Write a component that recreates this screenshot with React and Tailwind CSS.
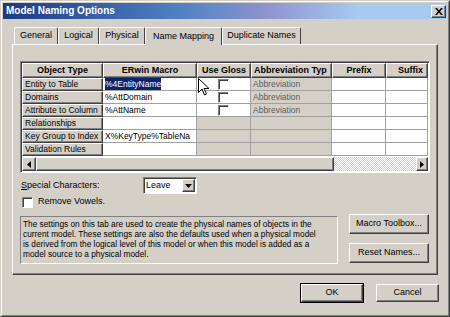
import React from 'react'

const raised = 'border border-t-white border-l-white border-r-[#404040] border-b-[#404040] shadow-[inset_-1px_-1px_#808080]'
const sunken = 'border border-t-[#808080] border-l-[#808080] border-r-white border-b-white shadow-[inset_1px_1px_#404040]'

const rows = [
    { type: 'Entity to Table', macro: '%4EntityName', gloss: true, abbr: 'Abbreviation', selected: true },
    { type: 'Domains', macro: '%AttDomain', gloss: true, abbr: 'Abbreviation' },
    { type: 'Attribute to Column', macro: '%AttName', gloss: true, abbr: 'Abbreviation' },
    { type: 'Relationships', macro: '', gloss: false, abbr: '' },
    { type: 'Key Group to Index', macro: 'X%KeyType%TableNa', gloss: false, abbr: '' },
    { type: 'Validation Rules', macro: '', gloss: false, abbr: '' },
]

const tabs = [
    { name: 'General', w: 'w-[44px]' },
    { name: 'Logical', w: 'w-[41px]' },
    { name: 'Physical', w: 'w-[46px]' },
    { name: 'Name Mapping', w: 'w-[77px]', active: true },
    { name: 'Duplicate Names', w: 'w-[79px]' },
]

function Checkbox() {
    return <div className={`w-[11px] h-[11px] shrink-0 bg-white ${sunken}`} />
}

function HeadCell({ children, className = '' }) {
    return (
        <div className={`h-[15px] flex items-center justify-center font-bold text-[9px] bg-[#d4d0c8] whitespace-nowrap overflow-hidden ${raised} ${className}`}>
            {children}
        </div>
    )
}

function Btn({ children, className = '', bold }) {
    return (
        <div className={`shrink-0 flex items-center justify-center bg-[#d4d0c8] text-[9px] ${bold ? 'outline outline-1 outline-black' : ''} ${raised} ${className}`}>
            {children}
        </div>
    )
}

export default function App() {
    const cell = 'h-[13px] flex items-center px-[2px] border-r border-b border-[#a0a0a0] text-[8.5px] whitespace-nowrap overflow-hidden'

    return (
        <div className="relative w-[450px] h-[317px] bg-[#d4d0c8] text-black font-['Liberation_Sans',Arial,sans-serif] border border-t-[#d4d0c8] border-l-[#d4d0c8] border-r-[#404040] border-b-[#404040] flex flex-col">
            <div className="flex-1 flex flex-col border border-t-white border-l-white border-r-[#808080] border-b-[#808080] p-px">
                {/* title bar */}
                <div className="h-[16px] flex items-center justify-between pl-[3px] pr-[1px] bg-[linear-gradient(90deg,#1c3a82_0%,#4f82c4_40%,#8f95cf_60%,#a6caf0_80%,#a6caf0_100%)]">
                    <span className="text-white font-bold text-[10px] leading-none">Model Naming Options</span>
                    <div className={`w-[15px] h-[13px] flex items-center justify-center bg-[#d4d0c8] ${raised}`}>
                        <svg width="8" height="7" viewBox="0 0 8 7">
                            <path d="M0 0h2l2 2.5L6 0h2L5 3.5 8 7H6L4 4.5 2 7H0l3-3.5z" fill="black" />
                        </svg>
                    </div>
                </div>

                {/* tabs */}
                <div className="mt-[8px] ml-[11px] flex h-[17px] items-end">
                    {tabs.map(t => (
                        <div
                            key={t.name}
                            className={`${t.w} h-[17px] shrink-0 flex items-center justify-center text-[9px] whitespace-nowrap border-t border-l border-r border-t-white border-l-white border-r-[#404040] rounded-t-[2px] bg-[#d4d0c8] ${t.active ? 'relative z-10 -mb-px h-[18px]' : ''}`}
                        >
                            {t.name}
                        </div>
                    ))}
                </div>

                {/* panel */}
                <div className={`ml-[9px] mr-[9px] h-[231px] px-[7px] pt-[16px] ${raised}`}>
                    {/* table */}
                    <div className={`w-[410px] bg-white ${sunken} p-px`}>
                        <div className="grid grid-cols-[81px_94px_54px_81px_54px_42px]">
                            <HeadCell>Object Type</HeadCell>
                            <HeadCell>ERwin Macro</HeadCell>
                            <HeadCell>Use Gloss</HeadCell>
                            <HeadCell className="justify-start pl-[2px]">Abbreviation Typ</HeadCell>
                            <HeadCell>Prefix</HeadCell>
                            <HeadCell className="justify-end pr-[4px]">Suffix</HeadCell>
                            {rows.map(r => (
                                <React.Fragment key={r.type}>
                                    <div className={`${cell} bg-[#d4d0c8] ${raised}`}>{r.type}</div>
                                    <div className={`${cell} bg-white`}>
                                        {r.selected ? <span className="bg-[#0a246a] text-white">{r.macro}</span> : r.macro}
                                    </div>
                                    <div className={`${cell} justify-center ${r.gloss ? 'bg-white' : 'bg-[#d4d0c8]'}`}>
                                        {r.gloss && <Checkbox />}
                                    </div>
                                    <div className={`${cell} bg-[#d4d0c8] text-[#5c5c5c]`}>{r.abbr}</div>
                                    <div className={`${cell} bg-white`} />
                                    <div className={`${cell} bg-white`} />
                                </React.Fragment>
                            ))}
                        </div>
                        {/* horizontal scrollbar */}
                        <div className="mt-[1px] h-[14px] flex bg-[#d4d0c8]">
                            <Btn className="w-[14px] h-[14px]">
                                <svg width="4" height="7" viewBox="0 0 4 7"><path d="M4 0v7L0 3.5z" fill="black" /></svg>
                            </Btn>
                            <div className={`w-[298px] h-[14px] shrink-0 ${raised}`} />
                            <div className="flex-1 h-[14px] bg-[repeating-conic-gradient(#ffffff_0_25%,#d4d0c8_0_50%)] bg-[length:2px_2px]" />
                            <Btn className="w-[12px] h-[14px]">
                                <svg width="4" height="7" viewBox="0 0 4 7"><path d="M0 0v7L4 3.5z" fill="black" /></svg>
                            </Btn>
                        </div>
                    </div>

                    {/* special characters */}
                    <div className="mt-[4px] flex items-center h-[17px] pl-[1px]">
                        <div className="w-[122px] shrink-0 text-[9px]"><u>S</u>pecial Characters:</div>
                        <div className={`w-[54px] h-[17px] shrink-0 bg-white flex items-center justify-between pl-[2px] pr-px ${sunken}`}>
                            <span className="text-[9px]">Leave</span>
                            <Btn className="w-[13px] h-[13px]">
                                <svg width="7" height="4" viewBox="0 0 7 4"><path d="M0 0h7L3.5 4z" fill="black" /></svg>
                            </Btn>
                        </div>
                    </div>
                    <div className="mt-[2px] flex items-center gap-[5px] pl-[2px] h-[12px]">
                        <Checkbox />
                        <span className="text-[9px]">Remove Vowels.</span>
                    </div>

                    {/* info + buttons */}
                    <div className="mt-[8px] flex items-start">
                        <div className={`w-[318px] h-[48px] shrink-0 px-[2px] pt-[2px] text-[8.3px] leading-[10px] whitespace-nowrap ${sunken} shadow-none`}>
                            The settings on this tab are used to create the physical names of objects in the<br />
                            current model. These settings are also the defaults used when a physical model<br />
                            is derived from the logical level of this model or when this model is added as a<br />
                            model source to a physical model.
                        </div>
                        <div className="ml-[11px] flex flex-col gap-[9px]">
                            <Btn className="w-[80px] h-[20px] -mt-[2px]">Macro Toolbox...</Btn>
                            <Btn className="w-[80px] h-[20px]">Reset Names...</Btn>
                        </div>
                    </div>
                </div>

                {/* dialog buttons */}
                <div className="mt-[9px] flex justify-end gap-[13px] pr-[8px]">
                    <Btn bold className="w-[62px] h-[18px]">OK</Btn>
                    <Btn className="w-[63px] h-[18px]">Cancel</Btn>
                </div>
            </div>

            {/* mouse pointer */}
            <svg className="absolute left-[197px] top-[77px]" width="11" height="18" viewBox="0 0 11 18">
                <path d="M0.5 0.5v14l3.5-3.5 2.5 6 2-1-2.5-5.5h5z" fill="white" stroke="black" strokeWidth="1" />
            </svg>
        </div>
    )
}
